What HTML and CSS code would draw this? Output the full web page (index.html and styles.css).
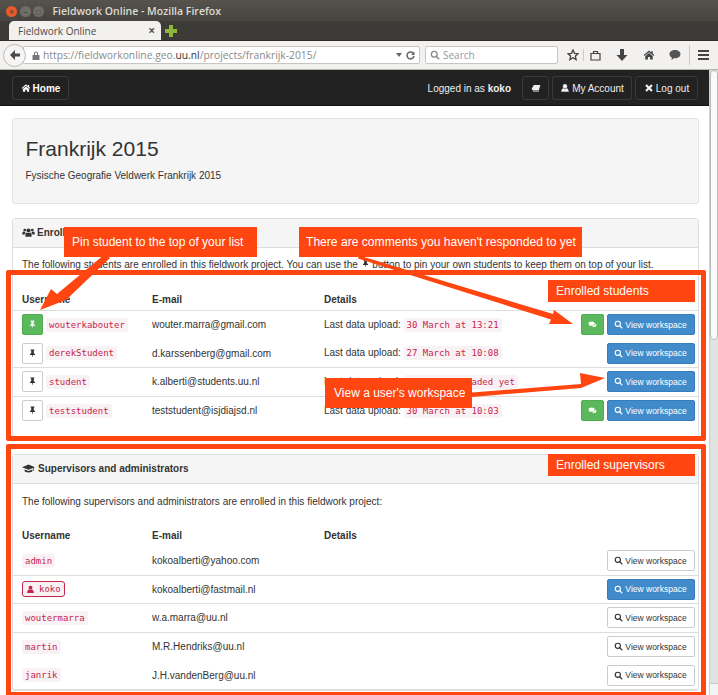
FILE: index.html

```html
<!DOCTYPE html>
<html lang="en">
<head>
  <meta charset="UTF-8" />
  <meta name="viewport" content="width=device-width, initial-scale=1" />
  <title>Fieldwork Online</title>
  <link rel="stylesheet" href="styles.css">
</head>
<body>
  <svg class="defs" width="0" height="0">
    <symbol id="i-home" viewBox="0 0 16 16"><path d="M8 2 1 8l1 1.2L8 4.2l6 5L15 8l-2-1.7V3h-2v1.6zM3 9.6V14h3.6v-3.2h2.8V14H13V9.6L8 5.4z"/></symbol>
    <symbol id="i-pin" viewBox="0 0 16 16"><path d="M4.500 1h7v1.300l-1.200.7v4l2.200 2.200v1.600H8.800L8 15.500l-.8-4.700H3.500V9.200L5.700 7V3l-1.200-.7z"/></symbol>
    <symbol id="i-comments" viewBox="0 0 16 16"><path d="M6.500 2.500C3.400 2.500 1 4.100 1 6.200c0 1.200.8 2.200 2 2.900-.2.700-.6 1.300-1 1.700 1 0 2-.4 2.800-1 .5.100 1.100.2 1.700.2 3.100 0 5.500-1.700 5.500-3.800S9.600 2.500 6.500 2.500z"/><path d="M13 6.300c0 2.700-2.900 4.400-6 4.500.8 1 2.200 1.500 3.700 1.500.4 0 .8 0 1.200-.1.600.500 1.400.8 2.200.8-.3-.3-.6-.8-.8-1.300C14.400 11.200 15 10.300 15 9.300c0-1.200-.8-2.300-2-3z"/></symbol>
    <symbol id="i-book" viewBox="0 0 16 16"><path d="M4.500 3H15l-2.500 8.500H3C1.500 11.500 1 10 1.500 8.500zM3.500 12.500H13l-.4 1H3.500c-.8 0-.8-1 0-1z"/></symbol>
    <symbol id="i-user" viewBox="0 0 16 16"><circle cx="8" cy="5" r="3.500"/><path d="M2 14c0-3.500 1.800-5.500 3.500-5.800.7.500 1.600.8 2.500.8s1.800-.3 2.500-.8C12.200 8.500 14 10.500 14 14z"/></symbol>
    <symbol id="i-times" viewBox="0 0 16 16"><path d="M4.500 2 8 5.500 11.500 2 14 4.500 10.500 8l3.500 3.500-2.500 2.500L8 10.500 4.500 14 2 11.500 5.500 8 2 4.500z"/></symbol>
    <symbol id="i-users" viewBox="0 0 18 16"><circle cx="9" cy="5" r="3"/><circle cx="3.500" cy="4.500" r="2"/><circle cx="14.500" cy="4.500" r="2"/><path d="M4.500 14V11c0-2 1.500-3 2-3 .7.500 1.500.8 2.500.8s1.800-.3 2.500-.8c.5 0 2 1 2 3v3zM0 11V9c0-1.500.8-2.300 1.500-2.300.5.400 1.200.6 2 .6.200 0 .4 0 .6-.1-.1.700.3 1.300.8 1.600C3.800 9.300 3.400 10 3.300 11zM18 11V9c0-1.500-.8-2.300-1.500-2.300-.5.400-1.200.6-2 .6-.2 0-.4 0-.6-.1.100.7-.3 1.300-.8 1.600 1.100.5 1.500 1.200 1.600 2.200z"/></symbol>
    <symbol id="i-cap" viewBox="0 0 20 16"><path d="M10 2 0 6l10 4 7-2.800V12h1V6.800L20 6z"/><path d="M4 9.500V12c0 1.300 2.800 2.200 6 2.200s6-.9 6-2.200V9.500L10 12z"/></symbol>
    <symbol id="i-search" viewBox="0 0 16 16"><circle cx="6.800" cy="6.800" r="4.600" fill="none" stroke="currentColor" stroke-width="2"/><path d="m10 10 4 4" stroke="currentColor" stroke-width="2.400" stroke-linecap="round"/></symbol>
  </svg>

  <div class="window">
    <div class="titlebar">
      <span class="dot dot-close">×</span>
      <span class="dot">–</span>
      <span class="dot">□</span>
      <span class="win-title">Fieldwork Online - Mozilla Firefox</span>
    </div>
    <div class="tabbar">
      <div class="tab"><span>Fieldwork Online</span><span class="tab-x">×</span></div>
      <svg class="tab-plus" width="12" height="12" viewBox="0 0 12 12"><path d="M4 0h4v4h4v4H8v4H4V8H0V4h4z" fill="#8fb63a"/></svg>
    </div>
    <div class="toolbar">
      <div class="back-btn">
        <svg width="10" height="10" viewBox="0 0 10 10"><path d="M5 0 0 5l5 5V6.500h5v-3H5z" fill="#4a4a4a"/></svg>
      </div>
      <div class="urlbar">
        <svg class="url-lock" width="8" height="9" viewBox="0 0 8 9"><path d="M2 4V2.500a2 2 0 0 1 4 0V4h1.500v5H.5V4zm1 0h2V2.500a1 1 0 0 0-2 0z" fill="#777"/></svg>
        <span class="url-text">https://fieldworkonline.geo.<b>uu.nl</b>/projects/frankrijk-2015/</span>
        <span class="url-drop"></span>
        <svg class="url-reload" width="9" height="9" viewBox="0 0 9 9"><path d="M7.500 2.500A3.500 3.500 0 1 0 8 5" fill="none" stroke="#666" stroke-width="1.500"/><path d="M8.500 .5v3.500H5z" fill="#666"/></svg>
      </div>
      <div class="searchbar">
        <svg width="10" height="10" class="search-ico"><use href="#i-search"/></svg>
        <span>Search</span>
      </div>
      <div class="tool-icons">
        <svg class="tool-star" width="12" height="12" viewBox="0 0 12 12"><path d="M6 1l1.500 3.300 3.500.4-2.600 2.400.7 3.500L6 8.800l-3.100 1.800.7-3.500L1 4.700l3.500-.4z" fill="none" stroke="#444" stroke-width="1.300"/></svg>
        <span class="tool-sep"></span>
        <svg class="tool-bag" width="11" height="11" viewBox="0 0 11 11"><path d="M1 3.500h9V10H1zM3.500 3.500V1.500h4v2" fill="none" stroke="#444" stroke-width="1.200"/></svg>
        <svg class="tool-down" width="12" height="12" viewBox="0 0 12 12"><path d="M4 0h4v6h3.500L6 12 .5 6H4z" fill="#444"/></svg>
        <svg class="tool-home" width="12" height="12"><use href="#i-home"/></svg>
        <svg class="tool-chat" width="12" height="12" viewBox="0 0 12 12"><path d="M6 1C2.700 1 .5 2.800.5 5.200c0 1.500.9 2.700 2.300 3.400L2.500 11l2.700-1.900c.3 0 .5.100.8.100 3.300 0 5.500-1.800 5.500-4S9.300 1 6 1z" fill="#555"/></svg>
        <span class="tool-sep tool-sep-b"></span>
        <div class="tool-menu"><i></i><i></i><i></i></div>
      </div>
    </div>

    <div class="viewport">
      <div class="page">
        <nav class="navbar">
          <a class="nav-btn nav-home"><svg><use href="#i-home"/></svg>Home</a>
          <div class="nav-right">
            <span class="nav-user">Logged in as <b>koko</b></span>
            <a class="nav-btn nav-book"><svg><use href="#i-book"/></svg></a>
            <a class="nav-btn nav-account"><svg><use href="#i-user"/></svg>My Account</a>
            <a class="nav-btn nav-logout"><svg><use href="#i-times"/></svg>Log out</a>
          </div>
        </nav>

        <div class="container">
          <div class="jumbotron">
            <h1>Frankrijk 2015</h1>
            <p>Fysische Geografie Veldwerk Frankrijk 2015</p>
          </div>

          <section class="panel panel-students">
            <div class="panel-heading"><svg class="ico-users"><use href="#i-users"/></svg>Enrolled students</div>
            <p class="panel-intro">The following students are enrolled in this fieldwork project. You can use the <svg class="ico-inline"><use href="#i-pin"/></svg> button to pin your own students to keep them on top of your list.</p>
            <div class="row row-head"><span>Username</span><span>E-mail</span><span>Details</span></div>
            <div class="row no-line">
              <span class="user-cell"><a class="btn btn-square btn-green"><svg><use href="#i-pin"/></svg></a><code>wouterkabouter</code></span>
              <span>wouter.marra@gmail.com</span>
              <span>Last data upload: <code>30 March at 13:21</code></span>
              <span class="actions"><a class="btn btn-comment"><svg><use href="#i-comments"/></svg></a><a class="btn btn-blue"><svg><use href="#i-search"/></svg>View workspace</a></span>
            </div>
            <div class="row">
              <span class="user-cell"><a class="btn btn-square"><svg><use href="#i-pin"/></svg></a><code>derekStudent</code></span>
              <span>d.karssenberg@gmail.com</span>
              <span>Last data upload: <code>27 March at 10:08</code></span>
              <span class="actions"><a class="btn btn-blue"><svg><use href="#i-search"/></svg>View workspace</a></span>
            </div>
            <div class="row">
              <span class="user-cell"><a class="btn btn-square"><svg><use href="#i-pin"/></svg></a><code>student</code></span>
              <span>k.alberti@students.uu.nl</span>
              <span>Last data upload: <code>No data uploaded yet</code></span>
              <span class="actions"><a class="btn btn-blue"><svg><use href="#i-search"/></svg>View workspace</a></span>
            </div>
            <div class="row no-line">
              <span class="user-cell"><a class="btn btn-square"><svg><use href="#i-pin"/></svg></a><code>teststudent</code></span>
              <span>teststudent@isjdiajsd.nl</span>
              <span>Last data upload: <code>30 March at 10:03</code></span>
              <span class="actions"><a class="btn btn-comment"><svg><use href="#i-comments"/></svg></a><a class="btn btn-blue"><svg><use href="#i-search"/></svg>View workspace</a></span>
            </div>
          </section>

          <section class="panel panel-staff">
            <div class="panel-heading"><svg class="ico-cap"><use href="#i-cap"/></svg>Supervisors and administrators</div>
            <p class="panel-intro panel-intro-staff">The following supervisors and administrators are enrolled in this fieldwork project:</p>
            <div class="row row-head row-head-staff"><span>Username</span><span>E-mail</span><span>Details</span></div>
            <div class="row">
              <span class="user-cell"><code>admin</code></span>
              <span>kokoalberti@yahoo.com</span><span></span>
              <span class="actions"><a class="btn btn-white"><svg><use href="#i-search"/></svg>View workspace</a></span>
            </div>
            <div class="row">
              <span class="user-cell"><code class="code-me"><svg><use href="#i-user"/></svg>koko</code></span>
              <span>kokoalberti@fastmail.nl</span><span></span>
              <span class="actions"><a class="btn btn-blue"><svg><use href="#i-search"/></svg>View workspace</a></span>
            </div>
            <div class="row">
              <span class="user-cell"><code>woutermarra</code></span>
              <span>w.a.marra@uu.nl</span><span></span>
              <span class="actions"><a class="btn btn-white"><svg><use href="#i-search"/></svg>View workspace</a></span>
            </div>
            <div class="row no-line">
              <span class="user-cell"><code>martin</code></span>
              <span>M.R.Hendriks@uu.nl</span><span></span>
              <span class="actions"><a class="btn btn-white"><svg><use href="#i-search"/></svg>View workspace</a></span>
            </div>
            <div class="row">
              <span class="user-cell"><code>janrik</code></span>
              <span>J.H.vandenBerg@uu.nl</span><span></span>
              <span class="actions"><a class="btn btn-white"><svg><use href="#i-search"/></svg>View workspace</a></span>
            </div>
          </section>
        </div>
      </div>

      <div class="scrollbar">
        <div class="scroll-thumb"></div>
        <div class="scroll-down"></div>
      </div>
    </div>

    <!-- annotations drawn on top of the screenshot -->
    <div class="mark mark-students"></div>
    <div class="mark mark-staff"></div>
    <svg class="arrows" width="718" height="695" viewBox="0 0 718 695">
      <path d="M105 254 110 258 66 300 40 310 51 289 57 294z"/>
      <path d="M359 255.500 553 314 554 310 573 324 549 324 551 319.500 358 258.500z"/>
      <path d="M472 392.500 581 384 580 373 605 378 581 388 472 397z"/>
    </svg>
    <div class="note note-pin">Pin student to the top of your list</div>
    <div class="note note-comments">There are comments you haven't responded to yet</div>
    <div class="note note-enrolled">Enrolled students</div>
    <div class="note note-workspace">View a user's workspace</div>
    <div class="note note-supervisors">Enrolled supervisors</div>
  </div>
</body>
</html>
```

FILE: styles.css

```css
* {
  box-sizing: border-box;
}
body {
  margin: 0;
  font-family: "Liberation Sans", Arial, sans-serif;
  font-size: 10px;
  color: #333;
  background: #fff;
}
.defs {
  position: absolute;
}
svg {
  fill: currentColor;
}
.window {
  position: relative;
  width: 718px;
  height: 695px;
  overflow: hidden;
  display: flex;
  flex-direction: column;
}

/* browser chrome */
.titlebar {
  height: 21px;
  display: flex;
  align-items: center;
  padding: 1px 0 0 6px;
  background: linear-gradient(#55534c, #45443f);
  color: #dfdbd2;
  font-family: "Open Sans", sans-serif;
  font-size: 10.5px;
  font-weight: 600;
}
.dot {
  width: 11px;
  height: 11px;
  margin-right: 2.500px;
  border-radius: 50%;
  background: #6e6d67;
  color: #45443f;
  font-size: 8px;
  line-height: 11px;
  text-align: center;
}
.dot-close {
  background: #e9592c;
}
.win-title {
  margin-left: 6px;
}
.tabbar {
  height: 20px;
  display: flex;
  align-items: flex-end;
  padding-left: 9px;
  background: #3c3b37;
  border-bottom: 1px solid #2e2d2a;
}
.tab {
  width: 152px;
  height: 19px;
  display: flex;
  justify-content: space-between;
  align-items: center;
  padding: 0 6px 0 9px;
  background: #f2f1f0;
  border-radius: 5px 5px 0 0;
  color: #4c4c4c;
  font-family: "Open Sans", sans-serif;
  font-size: 10px;
}
.tab-x {
  font-size: 12px;
  font-weight: 700;
  color: #555;
}
.tab-plus {
  margin: 0 0 3px 4px;
}
.toolbar {
  height: 29px;
  display: flex;
  align-items: center;
  padding-left: 3px;
  background: #f2f1f0;
  border-bottom: 1px solid #b6b4b0;
}
.back-btn {
  width: 23px;
  height: 23px;
  display: flex;
  align-items: center;
  justify-content: center;
  border: 1px solid #bbb;
  border-radius: 50%;
  background: #f6f5f4;
  position: relative;
  z-index: 1;
}
.urlbar {
  width: 397px;
  height: 18px;
  margin-left: -3px;
  display: flex;
  align-items: center;
  padding: 0 4px 0 8px;
  background: #fff;
  border: 1px solid #c8c6c2;
  border-radius: 0 2px 2px 0;
  color: #8a8a8a;
  font-family: "Open Sans", sans-serif;
  font-size: 10.3px;
  white-space: nowrap;
}
.url-lock {
  margin-right: 3px;
}
.url-text b {
  font-weight: 400;
  color: #333;
}
.url-drop {
  width: 0;
  height: 0;
  margin-left: auto;
  border: 3px solid transparent;
  border-top: 4px solid #666;
  border-bottom: 0;
}
.url-reload {
  margin-left: 4px;
}
.searchbar {
  width: 133px;
  height: 18px;
  margin-left: 5px;
  display: flex;
  align-items: center;
  gap: 3px;
  padding-left: 4px;
  background: #fff;
  border: 1px solid #c8c6c2;
  border-radius: 2px;
  color: #999;
  font-family: "Open Sans", sans-serif;
  font-size: 10px;
}
.search-ico {
  color: #888;
}
.tool-icons {
  flex: 1;
  display: flex;
  align-items: center;
  padding-left: 9px;
  color: #444;
}
.tool-sep {
  width: 1px;
  height: 12px;
  margin: 0 6px 0 4px;
  background: #ccc;
}
.tool-down {
  margin-left: 15px;
}
.tool-home {
  margin-left: 15px;
}
.tool-chat {
  margin-left: 14px;
}
.tool-sep-b {
  height: 20px;
  margin: 0 8px 0 8px;
}
.tool-menu i {
  display: block;
  width: 11px;
  height: 2px;
  margin: 2px 0;
  background: #444;
}

/* page */
.viewport {
  flex: 1;
  display: flex;
  min-height: 0;
}
.page {
  flex: 1;
  min-width: 0;
}
.scrollbar {
  width: 9px;
  background: #e2e2e2;
  border-left: 1px solid #d0d0d0;
  display: flex;
  flex-direction: column;
  justify-content: space-between;
}
.scroll-thumb {
  height: 270px;
  background: #fafafa;
  border: 1px solid #bbb;
  border-radius: 4px;
}
.scroll-down {
  height: 12px;
  background: #f4f4f4;
  border-top: 1px solid #ccc;
}
.navbar {
  height: 36px;
  display: flex;
  align-items: center;
  justify-content: space-between;
  padding: 0 11px 0 12px;
  background: #222;
  color: #eee;
  border-bottom: 1px solid #111;
}
.nav-right {
  display: flex;
  align-items: center;
}
.nav-user {
  margin-right: 11px;
  padding-top: 1px;
}
.nav-btn {
  height: 24px;
  display: flex;
  align-items: center;
  justify-content: center;
  padding-top: 1px;
  border: 1px solid #3a3a3a;
  border-radius: 3px;
  color: #eee;
}
.nav-btn svg {
  width: 10px;
  height: 10px;
  margin-right: 2px;
}
.nav-home {
  width: 57px;
  color: #fff;
  font-weight: 700;
}
.nav-book {
  width: 27px;
}
.nav-book svg {
  margin: 0;
}
.nav-account {
  width: 80px;
  margin-left: 3px;
}
.nav-logout {
  width: 63px;
  margin-left: 3px;
}
.container {
  padding: 12px 10.500px 0 11.500px;
}
.jumbotron {
  height: 86px;
  padding: 18px 13px 0;
  background: #f5f5f5;
  border: 1px solid #e3e3e3;
  border-radius: 3px;
  margin-bottom: 14px;
}
.jumbotron h1 {
  margin: 0;
  font-size: 21px;
  font-weight: 400;
  line-height: 24px;
}
.jumbotron p {
  margin: 9px 0 0;
}
.panel {
  border: 1px solid #ddd;
  border-radius: 3px;
}
.panel-students {
  height: 222px;
  margin-bottom: 14px;
}
.panel-heading {
  height: 29px;
  display: flex;
  align-items: center;
  padding: 0 0 2px 9.500px;
  background: #f5f5f5;
  border-bottom: 1px solid #ddd;
  font-weight: 700;
  white-space: nowrap;
}
.ico-users {
  width: 13px;
  height: 11px;
  margin-right: 2px;
}
.ico-cap {
  width: 13px;
  height: 11px;
  margin-right: 3px;
}
.panel-intro {
  margin: 10px 0 0 9.500px;
  line-height: 14px;
  white-space: nowrap;
}
.panel-intro-staff {
  margin-top: 11px;
}
.ico-inline {
  width: 9px;
  height: 9px;
}
.row {
  height: 28.600px;
  display: grid;
  grid-template-columns: 130px 172px 1fr auto;
  align-items: center;
  padding: 0 3px 0 9.500px;
  border-bottom: 1px solid #ddd;
}
.no-line {
  border-bottom-color: transparent;
}
.row-head {
  height: 39px;
  font-weight: 700;
  padding-top: 17px;
}
.row-head-staff {
  height: 23.500px;
  padding-top: 0;
  margin-top: 14.500px;
  border-bottom: 0;
}
code {
  display: inline-block;
  padding: 1px 3px;
  font-family: "DejaVu Sans Mono", "Liberation Mono", monospace;
  font-size: 9px;
  line-height: 12px;
  color: #c7254e;
  background: #f9f2f4;
  border-radius: 3px;
}
.code-me {
  display: inline-flex;
  align-items: center;
  border: 1px solid #c7254e;
  padding: 1px 3px;
}
.code-me svg {
  width: 9px;
  height: 9px;
  margin-right: 4px;
}
.user-cell {
  display: flex;
  align-items: center;
  gap: 3px;
}
.actions {
  display: flex;
  gap: 3px;
  justify-content: flex-end;
}
.btn {
  height: 21px;
  display: flex;
  align-items: center;
  justify-content: center;
  border-radius: 2px;
  font-size: 8.500px;
}
.btn svg {
  width: 9px;
  height: 9px;
}
.btn-blue,
.btn-white {
  width: 88px;
  gap: 2px;
}
.btn-blue {
  background: #428bca;
  border: 1px solid #357ebd;
  color: #fff;
}
.btn-white {
  background: #fff;
  border: 1px solid #ccc;
  color: #333;
}
.btn-square {
  width: 21px;
  border: 1px solid #ccc;
  background: #fff;
  color: #333;
}
.btn-green {
  background: #5cb85c;
  border-color: #4cae4c;
  color: #e9f6e9;
}
.btn-comment {
  width: 23px;
  background: #5cb85c;
  border: 1px solid #4cae4c;
  color: #fff;
}

/* annotations */
.mark {
  position: absolute;
  left: 6px;
  width: 700px;
  border: 5px solid #ff4510;
  border-radius: 2px;
}
.mark-students {
  top: 270px;
  height: 171px;
}
.mark-staff {
  top: 444px;
  height: 253px;
}
.arrows {
  position: absolute;
  top: 0;
  left: 0;
  fill: #ff4510;
}
.note {
  position: absolute;
  display: flex;
  align-items: center;
  padding-left: 8px;
  background: #ff4510;
  color: #fff;
  font-size: 12px;
  white-space: nowrap;
}
.note-pin {
  left: 64px;
  top: 227px;
  width: 193px;
  height: 30px;
}
.note-comments {
  left: 299px;
  top: 227px;
  width: 283px;
  height: 30px;
  padding-left: 7px;
  font-size: 12.100px;
}
.note-enrolled {
  left: 548px;
  top: 280px;
  width: 147px;
  height: 22px;
}
.note-workspace {
  left: 325px;
  top: 378px;
  width: 147px;
  height: 30px;
  padding-left: 9px;
}
.note-supervisors {
  left: 548px;
  top: 454px;
  width: 147px;
  height: 22px;
}
```
